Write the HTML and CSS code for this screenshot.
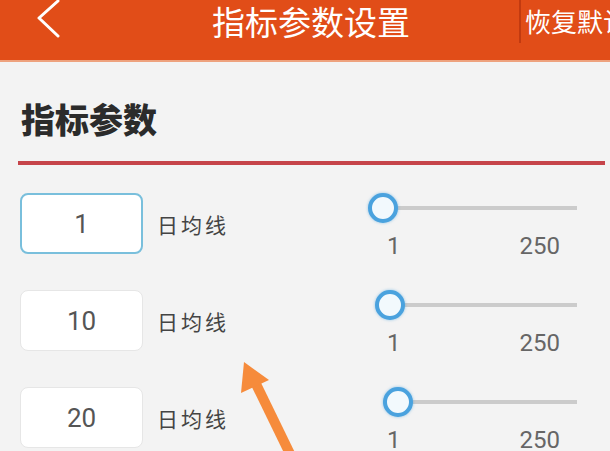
FILE: index.html
```html
<!DOCTYPE html>
<html lang="zh-CN">
<head>
    <meta charset="UTF-8">
    <meta name="viewport" content="width=device-width, initial-scale=1.0">
    <title>指标参数设置</title>
    <link rel="stylesheet" href="styles.css">
</head>
<body>
    <div class="header">
        <div class="back">
            <svg width="26" height="40" viewBox="0 0 26 40">
                <polyline points="22,1 3,18 22,36" fill="none" stroke="#fff" stroke-width="3" stroke-linecap="round" stroke-linejoin="round"/>
            </svg>
        </div>
        <div class="title">指标参数设置</div>
        <div class="reset">恢复默认</div>
    </div>

    <div class="content">
        <h2 class="section-title">指标参数</h2>

        <div class="param-row">
            <div class="param-input focused">1</div>
            <div class="param-label">日均线</div>
            <div class="slider">
                <div class="track"><span class="thumb" style="left: 0%"></span></div>
                <div class="range"><span>1</span><span>250</span></div>
            </div>
        </div>

        <div class="param-row">
            <div class="param-input">10</div>
            <div class="param-label">日均线</div>
            <div class="slider">
                <div class="track"><span class="thumb" style="left: 3.6%"></span></div>
                <div class="range"><span>1</span><span>250</span></div>
            </div>
        </div>

        <div class="param-row">
            <div class="param-input">20</div>
            <div class="param-label">日均线</div>
            <div class="slider">
                <div class="track"><span class="thumb" style="left: 7.6%"></span></div>
                <div class="range"><span>1</span><span>250</span></div>
            </div>
        </div>
    </div>

    <svg class="arrow" width="610" height="451" viewBox="0 0 610 451">
        <line x1="293" y1="460" x2="256" y2="384" stroke="#f68b3b" stroke-width="10"/>
        <polygon points="244,362 241,393 269,380" fill="#f68b3b"/>
    </svg>
</body>
</html>
```

FILE: styles.css
```css
body {
    margin: 0;
    background-color: #f3f3f3;
    font-family: Roboto, "Noto Sans CJK SC", sans-serif;
    overflow: hidden;
    height: 451px;
}
.header {
    height: 60px;
    background-color: #e14d18;
    border-bottom: 2px solid #eea27e;
    display: flex;
    align-items: flex-start;
    color: white;
}
.back {
    width: 212px;
    padding-left: 36px;
    box-sizing: border-box;
}
.back svg {
    display: block;
}
.title {
    font-family: "Noto Sans CJK SC", sans-serif;
    font-size: 33px;
    line-height: 42px;
}
.reset {
    margin-left: auto;
    width: 91px;
    height: 43px;
    box-sizing: border-box;
    border-left: 2px solid #c23a10;
    padding-left: 4px;
    font-family: "Noto Sans CJK SC", sans-serif;
    font-size: 26px;
    line-height: 42px;
    white-space: nowrap;
    overflow: hidden;
}
.content {
    padding: 0 5px 0 18px;
}
.section-title {
    margin: 0;
    padding: 35px 0 0 3px;
    box-sizing: border-box;
    font-family: "Noto Sans CJK SC", sans-serif;
    font-size: 34px;
    font-weight: 900;
    line-height: 44px;
    color: #2b2b2b;
    border-bottom: 4px solid #c6444a;
    height: 103px;
}
.param-row {
    display: flex;
    align-items: center;
    margin-top: 28px;
    height: 61px;
    padding-left: 2px;
}
.param-row + .param-row {
    margin-top: 36px;
}
.param-input {
    width: 123px;
    height: 61px;
    box-sizing: border-box;
    background-color: white;
    border: 1px solid #e6e6e6;
    border-radius: 8px;
    display: flex;
    align-items: center;
    justify-content: center;
    font-size: 26px;
    color: #555;
}
.param-input.focused {
    border: 2px solid #79bfdc;
}
.param-label {
    margin-left: 14px;
    font-family: "Noto Sans CJK SC", sans-serif;
    font-size: 21px;
    letter-spacing: 3px;
    color: #444;
}
.slider {
    margin-left: auto;
    margin-right: 28px;
    width: 194px;
    margin-top: 6px;
}
.track {
    position: relative;
    height: 4px;
    background-color: #cbcbcb;
    margin: 12px 0 22px;
}
.thumb {
    position: absolute;
    top: -13px;
    width: 22px;
    height: 22px;
    margin-left: -15px;
    border: 4px solid #4aa2de;
    border-radius: 50%;
    background-color: #f2f9fd;
    box-shadow: 0 0 3px rgba(74, 162, 222, 0.6);
}
.range {
    display: flex;
    justify-content: space-between;
    padding: 0 17px 0 4px;
    font-size: 24px;
    line-height: 28px;
    color: #666;
}
.arrow {
    position: absolute;
    left: 0;
    top: 0;
    pointer-events: none;
}
```
